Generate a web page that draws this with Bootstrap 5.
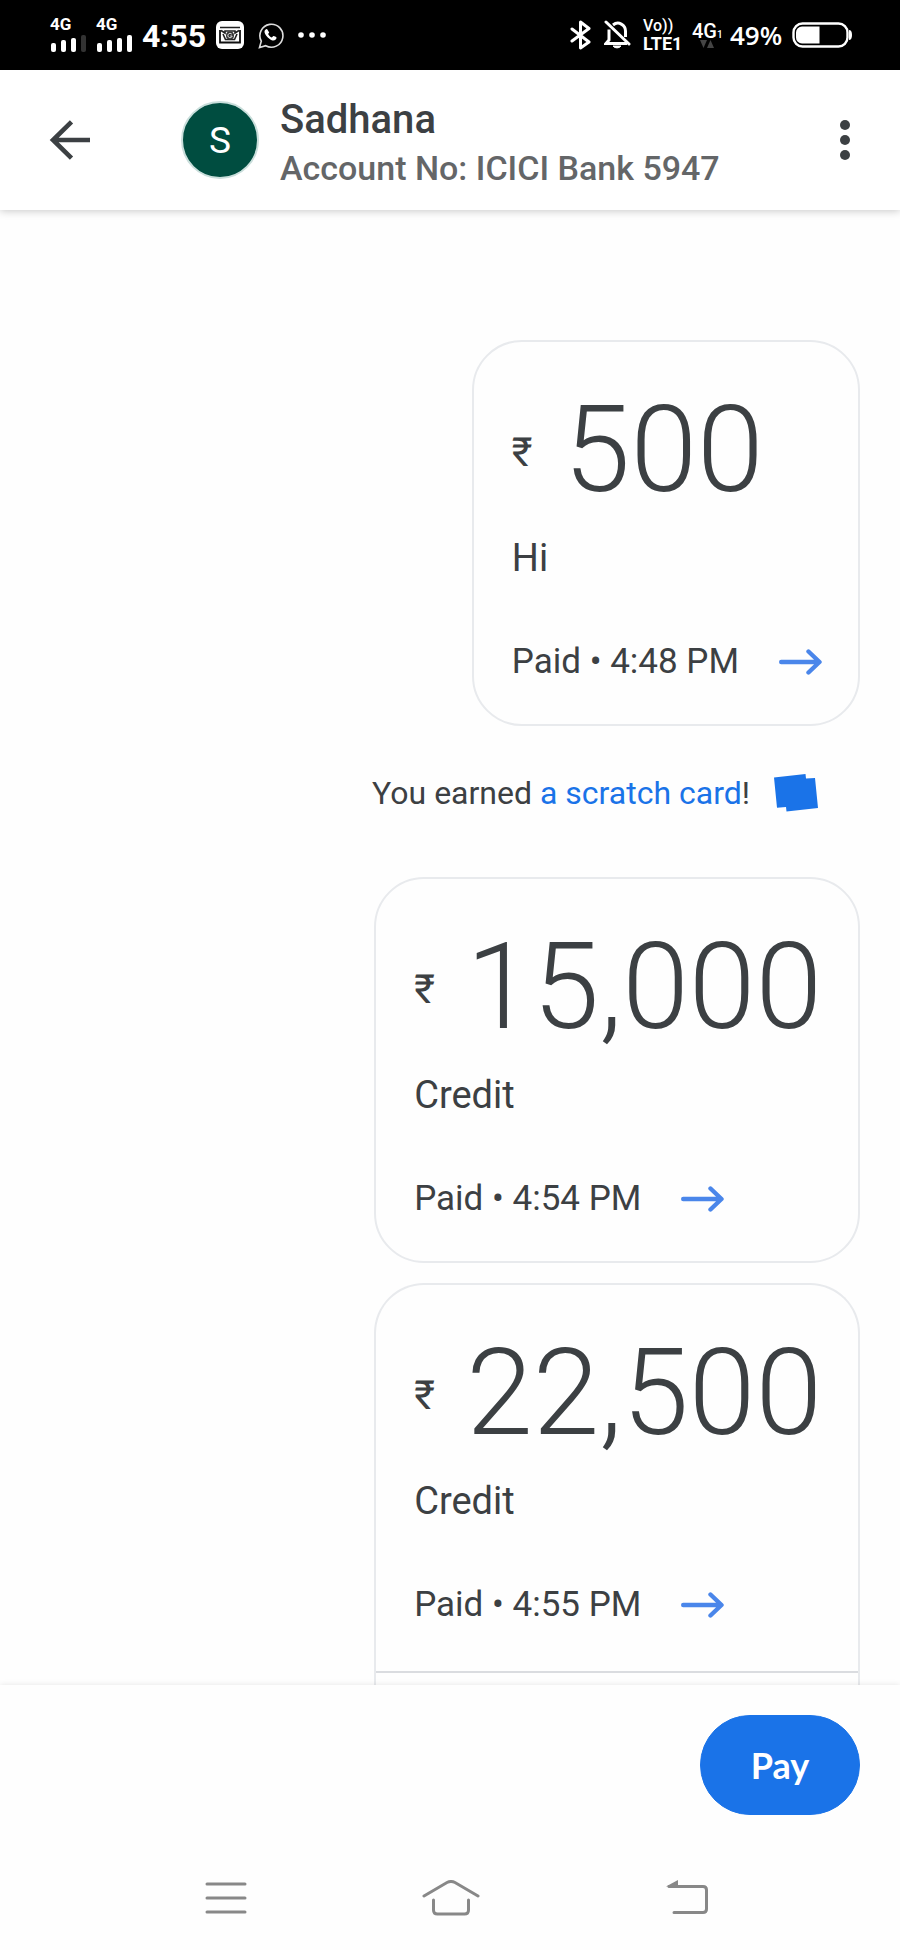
<!DOCTYPE html>
<html lang="en">
<head>
<meta charset="utf-8">
<meta name="viewport" content="width=device-width, initial-scale=1">
<title>Sadhana – Payments</title>
<link href="https://cdn.jsdelivr.net/npm/bootstrap@5.3.0/dist/css/bootstrap.min.css" rel="stylesheet">
<style>
  body { font-family: Roboto, "Liberation Sans", sans-serif; color: #3c4043; background: #fefefe; }
  svg { display: block; flex: none; }

  .status-bar { height: 70px; padding: 0 48px 0 50px; background: #000; color: #fff; }
  .status-left { gap: 10px; }
  .signal { width: 36px; }
  .signal-label { font: 700 17px/13px Roboto, sans-serif; margin-bottom: 4px; }
  .clock { font-size: 32px; line-height: 32px; font-weight: 700; width: 64px; padding-top: 2px; }
  .volte { width: 41px; }
  .volte-top { font: 500 16px/18px Roboto, sans-serif; }
  .volte-bottom { font: 700 18px/18px Roboto, sans-serif; }
  .net-type { font-size: 20px; line-height: 18px; font-weight: 500; width: 30px; }
  .net-sub { font-size: 10px; line-height: 10px; }
  .percent { font: 600 26px/32px "Open Sans", sans-serif; width: 54px; }

  .top-bar { height: 140px; padding: 0 40px 0 49px; background: #fff; box-shadow: 0 1px 8px rgba(0,0,0,.22); z-index: 1; }
  .icon-btn { background: none; border: 0; padding: 0; }
  .avatar { width: 78px; height: 78px; margin-left: 91px; margin-right: 21px; border: 2px solid #c9dedb; border-radius: 50%; background: #004d40; color: #fff; font-size: 37px; line-height: 37px; }
  .payee-block { padding-top: 8px; }
  .payee { font-size: 40px; line-height: 48px; font-weight: 500; margin: 0; }
  .account { font-size: 34px; line-height: 48px; font-weight: 500; color: #646668; }

  .feed { padding: 130px 40px 0; }
  .pay-card { border: 2px solid #e8eaed; border-radius: 50px; background: #fefefe; padding: 48px 36px 38px 38px; }
  .pay-card.is-open { border-bottom: 0; border-radius: 50px 50px 0 0; padding-bottom: 0; margin-top: 20px; }
  .amount-row { gap: 30px; }
  .rupee { font-size: 40px; line-height: 40px; width: 22px; padding-top: 5px; }
  .amount { font-size: 120px; line-height: 120px; font-weight: 300; }
  .note-line { font-size: 38px; line-height: 48px; margin: 24px 0 0; }
  .paid-row { gap: 40px; margin-top: 56px; }
  .paid-text { font-size: 35px; line-height: 48px; }
  .stub { border-top: 2px solid #dadce0; margin: 42px -36px 0 -38px; height: 14px; }
  .reward { font-size: 32px; line-height: 48px; gap: 24px; margin: 43px 42px 60px 0; }
  .reward a { color: #1a73e8; text-decoration: none; }

  .bottom-bar { padding: 30px 40px 35px; background: #fefefe; box-shadow: 0 0 6px rgba(0,0,0,.1); z-index: 1; }
  .btn-send { --bs-btn-bg: #1a73e8; --bs-btn-border-color: #1a73e8; --bs-btn-color: #fff; --bs-btn-hover-bg: #1765cc; --bs-btn-hover-color: #fff; font: 700 36px/48px Lato, sans-serif; width: 160px; height: 100px; border-radius: 50px; }
  .system-nav { height: 100px; padding: 0 144px 5px 157px; background: #fefefe; z-index: 1; }
  .recents { padding: 0 36px 0 48px; }
</style>
</head>
<body>
<div class="d-flex flex-column min-vh-100">

  <div class="status-bar d-flex align-items-center justify-content-between">
    <div class="status-left d-flex align-items-center">
      <div class="signal">
        <div class="signal-label">4G</div>
        <svg width="36" height="17" viewBox="0 0 36 17" fill="#fff"><rect x="1" y="8" width="5" height="9" rx="2"/><rect x="11" y="5" width="5" height="12" rx="2"/><rect x="21" y="3" width="5" height="14" rx="2"/><rect x="31" width="5" height="17" rx="2" fill="#333"/></svg>
      </div>
      <div class="signal">
        <div class="signal-label">4G</div>
        <svg width="36" height="17" viewBox="0 0 36 17" fill="#fff"><rect x="1" y="8" width="5" height="9" rx="2"/><rect x="11" y="5" width="5" height="12" rx="2"/><rect x="21" y="3" width="5" height="14" rx="2"/><rect x="31" width="5" height="17" rx="2"/></svg>
      </div>
      <div class="clock">4:55</div>
      <svg width="28" height="28" viewBox="0 0 28 28"><rect width="28" height="28" rx="6" fill="#fff"/><path d="M4 6.500h20M5 9.500l4 2.500v-2h10v2l4-2.500" fill="none" stroke="#222" stroke-width="1.600"/><path d="M4 9v12.500h20V9" fill="none" stroke="#111" stroke-width="1.800"/><path d="M7 13l2.500 5.500h9L21 13" fill="none" stroke="#222" stroke-width="1.600"/><circle cx="14" cy="14.500" r="4" fill="#333"/><path d="M15.800 13.200a2.200 2.200 0 1 0 .4 1.800h-2" fill="none" stroke="#ddd"/></svg>
      <svg class="ms-1" width="26" height="27" viewBox="0 0 26 27"><path d="M1.500 25.500l1.800-6.300A11.500 11.500 0 1 1 7.700 23.700z" fill="none" stroke="#ddd" stroke-width="1.600"/><path d="M9.200 7.200c-.7-.6-2.500.4-2.700 2.300-.2 2.600 3.700 7.300 7.200 8.700 2.700 1 5-.6 4.900-2.600-.1-.7-2.800-1.900-3.300-1.600l-1.500 1.600c-1.700-.8-3-2.200-3.700-3.700l1.100-1.500z" fill="#fff"/></svg>
      <svg class="ms-1" width="28" height="6" viewBox="0 0 28 6" fill="#fff"><circle cx="3" cy="3" r="2.800"/><circle cx="14" cy="3" r="2.800"/><circle cx="25" cy="3" r="2.800"/></svg>
    </div>
    <div class="d-flex align-items-center gap-2">
      <svg width="22" height="30" viewBox="0 0 22 30" fill="none" stroke="#fff" stroke-width="3" stroke-linejoin="round" stroke-linecap="round"><path d="M2 9l17 13-8.500 6V2L19 8.500 2 21"/></svg>
      <svg class="ms-1 me-1" width="27" height="30" viewBox="0 0 27 30" fill="none" stroke="#fff" stroke-width="3"><path d="M5 9.500V20l-3 3.500h21M9 5c5.500-4.500 12.500 0 12.500 6v6"/><path d="M2 2l23 22" stroke-linecap="round"/><path d="M9 26a4.500 3.500 0 0 0 8 0z" fill="#fff" stroke-width="1"/></svg>
      <div class="volte">
        <div class="volte-top">Vo))</div>
        <div class="volte-bottom">LTE1</div>
      </div>
      <div>
        <div class="net-type">4G<span class="net-sub">1</span></div>
        <svg class="ms-2" width="14" height="8" viewBox="0 0 14 8" fill="#444"><path d="M0 0h7L3.500 8zM7 8h7L10.500 0z"/></svg>
      </div>
      <div class="percent">49%</div>
      <svg width="60" height="26" viewBox="0 0 60 26"><rect x="1.500" y="1.500" width="54" height="23" rx="9" fill="none" stroke="#fff" stroke-width="2.400"/><path d="M10 4.500h17.500v17H10a6 6 0 0 1-6-6v-5a6 6 0 0 1 6-6z" fill="#fff"/><path d="M57 8q3 0 3 5t-3 5z" fill="#fff"/></svg>
    </div>
  </div>

  <header class="top-bar d-flex align-items-center position-relative">
    <button class="icon-btn" type="button" aria-label="Back">
      <svg width="41" height="40" viewBox="0 0 41 40" fill="none" stroke="#3c4043" stroke-width="4.600"><path d="M41 20H4M22.500 1.800L4 20l18.500 18.200"/></svg>
    </button>
    <div class="avatar d-flex align-items-center justify-content-center">S</div>
    <div class="payee-block flex-fill">
      <h1 class="payee">Sadhana</h1>
      <div class="account">Account No: ICICI Bank 5947</div>
    </div>
    <button class="icon-btn" type="button" aria-label="More options">
      <svg width="30" height="40" viewBox="0 0 30 40" fill="#3c4043"><circle cx="15" cy="5" r="5"/><circle cx="15" cy="20" r="5"/><circle cx="15" cy="35" r="5"/></svg>
    </button>
  </header>

  <main class="feed flex-fill d-flex flex-column align-items-end">
    <article class="pay-card">
      <div class="amount-row d-flex align-items-center"><span class="rupee">₹</span><span class="amount">500</span></div>
      <p class="note-line">Hi</p>
      <div class="paid-row d-flex align-items-center">
        <span class="paid-text">Paid • 4:48 PM</span>
        <svg width="43" height="26" viewBox="0 0 43 26" fill="none" stroke="#4a86ea" stroke-width="4.400" stroke-linecap="round" stroke-linejoin="round"><path d="M2.200 13H40M29.500 2.500L40.500 13 29.500 23.500"/></svg>
      </div>
    </article>

    <div class="reward d-flex align-items-center">
      <span>You earned <a href="#">a scratch card</a>!</span>
      <svg width="44" height="38" viewBox="0 0 44 38" fill="#1a73e8"><path d="M0 3.500L31.500 0 32 4.500 41 4 44 34 12.500 37.500 12 33 3 33.700z"/></svg>
    </div>

    <article class="pay-card">
      <div class="amount-row d-flex align-items-center"><span class="rupee">₹</span><span class="amount">15,000</span></div>
      <p class="note-line">Credit</p>
      <div class="paid-row d-flex align-items-center">
        <span class="paid-text">Paid • 4:54 PM</span>
        <svg width="43" height="26" viewBox="0 0 43 26" fill="none" stroke="#4a86ea" stroke-width="4.400" stroke-linecap="round" stroke-linejoin="round"><path d="M2.200 13H40M29.500 2.500L40.500 13 29.500 23.500"/></svg>
      </div>
    </article>

    <article class="pay-card is-open">
      <div class="amount-row d-flex align-items-center"><span class="rupee">₹</span><span class="amount">22,500</span></div>
      <p class="note-line">Credit</p>
      <div class="paid-row d-flex align-items-center">
        <span class="paid-text">Paid • 4:55 PM</span>
        <svg width="43" height="26" viewBox="0 0 43 26" fill="none" stroke="#4a86ea" stroke-width="4.400" stroke-linecap="round" stroke-linejoin="round"><path d="M2.200 13H40M29.500 2.500L40.500 13 29.500 23.500"/></svg>
      </div>
      <div class="stub"></div>
    </article>
  </main>

  <div class="bottom-bar position-relative d-flex justify-content-end">
    <button class="btn btn-send" type="button">Pay</button>
  </div>

  <nav class="system-nav position-relative d-flex align-items-center justify-content-between" aria-label="System">
    <button class="icon-btn recents" type="button" aria-label="Recent apps">
      <svg width="42" height="36" viewBox="0 0 42 36" stroke="#888" stroke-width="3" stroke-linecap="round"><path d="M2 4h38M2 18h38M2 32h38"/></svg>
    </button>
    <button class="icon-btn" type="button" aria-label="Home">
      <svg width="58" height="36" viewBox="0 0 58 36" fill="none" stroke="#888" stroke-width="3" stroke-linecap="round"><path d="M2 16L25 2.500q4-2 8 0L56 16M11.500 20v10q0 4 4 4h27q4 0 4-4V20"/></svg>
    </button>
    <button class="icon-btn px-5" type="button" aria-label="Go back">
      <svg width="42" height="36" viewBox="0 0 42 36" fill="none" stroke="#888" stroke-width="3" stroke-linecap="round"><path d="M3 6.500h34q3.500 0 3.500 3.500v19q0 3.500-3.500 3.500H8"/><path d="M0 6.500L12 0v7z" fill="#888" stroke="none"/></svg>
    </button>
  </nav>
</div>
<script src="https://cdn.jsdelivr.net/npm/bootstrap@5.3.0/dist/js/bootstrap.bundle.min.js"></script>
</body>
</html>
